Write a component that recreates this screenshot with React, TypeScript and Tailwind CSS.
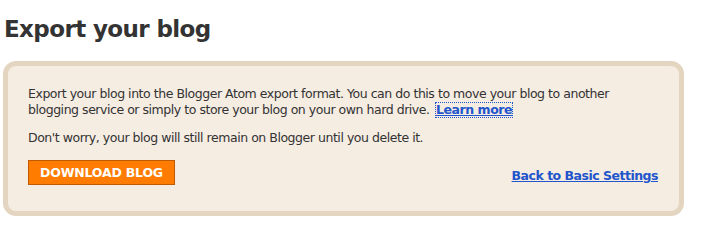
export default function App() {
  return (
    <div className="w-[722px] h-[250px] bg-white pl-[3px] pt-[13px] font-['DejaVu_Sans',sans-serif] text-[#333]">
      <h1 className="pl-px pt-[2px] text-[23px] font-bold leading-[28px] tracking-[-0.6px]">Export your blog</h1>

      <div className="mt-[18px] w-[681px] h-[155px] rounded-[13px] border-[5px] border-[#e3d5c0] bg-[#f5ece2] pl-[20px] pr-[20px] pt-[20px] text-[12.5px] leading-[16px] text-[#333]">
        <p className="tracking-[-0.46px]">
          Export your blog into the Blogger Atom export format. You can do this to move your blog to another
          blogging service or simply to store your blog on your own hard drive.{' '}
          <a href="#" className="ml-[2px] inline-block border border-dotted border-[#2255cc] leading-[14px] font-bold text-[#2255cc] underline">
            Learn more
          </a>
        </p>
        <p className="mt-[12px] tracking-[-0.46px]">Don't worry, your blog will still remain on Blogger until you delete it.</p>

        <div className="mt-[14px] flex items-start justify-between">
          <button className="h-[25px] w-[147px] border border-[#c05a00] bg-[#ff7c00] text-[12.5px] font-bold text-white tracking-[-0.2px]">
            DOWNLOAD BLOG
          </button>
          <a href="#" className="mr-[1px] mt-[8px] font-bold text-[#2255cc] underline tracking-[-0.5px]">
            Back to Basic Settings
          </a>
        </div>
      </div>
    </div>
  );
}
